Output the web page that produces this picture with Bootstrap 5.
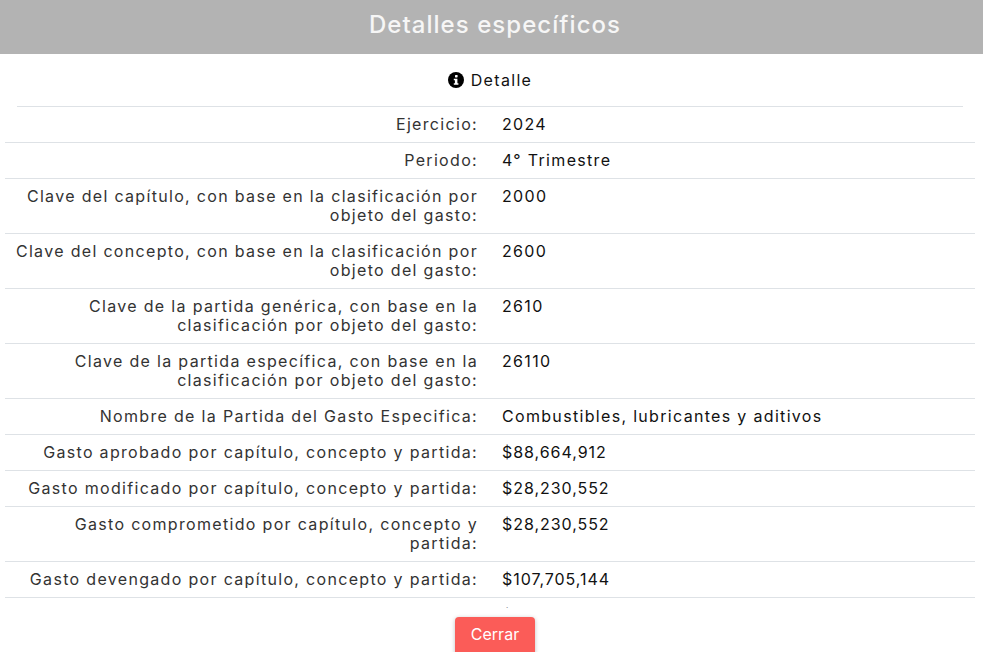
<!DOCTYPE html>
<html lang="es"><head><meta charset="utf-8">
<link href="https://cdn.jsdelivr.net/npm/bootstrap@5.3.0/dist/css/bootstrap.min.css" rel="stylesheet">
<style>
html,body{height:100%;overflow:hidden;background:#fff}
body{font-family:"Inter","Liberation Sans",sans-serif;color:#212121;font-size:16px;letter-spacing:1.32px}
.shell{height:652px}
.head{height:54px;background:#b3b3b3;color:#f6f6f6;font-size:24px;font-weight:500;letter-spacing:1.05px;padding:0 0 4px 7px}
.scroller{height:554px;overflow:hidden;padding:0 8px 0 5px}
.ttl{height:52px;color:#111;gap:7px}
.ttlrule{margin:0 12px;border-top:1px solid #dee2e6}
.line{border-top:1px solid #dee2e6;padding:8px 0;line-height:19px;margin:0;display:flex}
.line.lead-row{border-top:0}
.lab{width:473px;text-align:right;padding-left:5px;color:#333}
.val{padding-left:24px;color:#111}
.amount{letter-spacing:.95px}
.foot{height:44px;padding:9px 0 0 7px}
.closebtn{width:80px;height:40px;background:#fb5c58;border:0;border-radius:4px;color:#fff;font-size:16px;letter-spacing:0;padding:0 0 6px;box-shadow:0 1px 4px rgba(0,0,0,.25)}
</style></head><body>
<div class="shell d-flex flex-column">
<div class="head d-flex align-items-center justify-content-center">Detalles específicos</div>
<div class="scroller">
<div class="ttl d-flex align-items-center justify-content-center">
<svg width="16" height="16" viewBox="0 0 16 16"><circle cx="8" cy="8" r="8" fill="#000"/><rect x="7" y="3" width="2.6" height="2.4" rx=".6" fill="#fff"/><path d="M5.8 6.7h3.6v4.6h1v1.5H5.8v-1.5h1.1V8.2H5.8z" fill="#fff"/></svg>
<span>Detalle</span></div>
<div class="ttlrule"></div>
<div class="line lead-row"><div class="lab">Ejercicio:</div><div class="val">2024</div></div>
<div class="line"><div class="lab">Periodo:</div><div class="val">4° Trimestre</div></div>
<div class="line"><div class="lab">Clave del capítulo, con base en la clasificación por objeto del gasto:</div><div class="val">2000</div></div>
<div class="line"><div class="lab">Clave del concepto, con base en la clasificación por objeto del gasto:</div><div class="val">2600</div></div>
<div class="line"><div class="lab">Clave de la partida genérica, con base en la clasificación por objeto del gasto:</div><div class="val">2610</div></div>
<div class="line"><div class="lab">Clave de la partida específica, con base en la clasificación por objeto del gasto:</div><div class="val">26110</div></div>
<div class="line"><div class="lab">Nombre de la Partida del Gasto Especifica:</div><div class="val">Combustibles, lubricantes y aditivos</div></div>
<div class="line"><div class="lab">Gasto aprobado por capítulo, concepto y partida:</div><div class="val amount">$88,664,912</div></div>
<div class="line"><div class="lab">Gasto modificado por capítulo, concepto y partida:</div><div class="val amount">$28,230,552</div></div>
<div class="line"><div class="lab">Gasto comprometido por capítulo, concepto y partida:</div><div class="val amount">$28,230,552</div></div>
<div class="line"><div class="lab">Gasto devengado por capítulo, concepto y partida:</div><div class="val amount">$107,705,144</div></div>
<div class="line"><div class="lab">Gasto ejercido por capítulo, concepto y partida:</div><div class="val amount">$107,705,144</div></div>
</div>
<div class="foot d-flex justify-content-center"><button class="btn closebtn" type="button">Cerrar</button></div>
</div>
<script src="https://cdn.jsdelivr.net/npm/bootstrap@5.3.0/dist/js/bootstrap.bundle.min.js"></script>
</body></html>
